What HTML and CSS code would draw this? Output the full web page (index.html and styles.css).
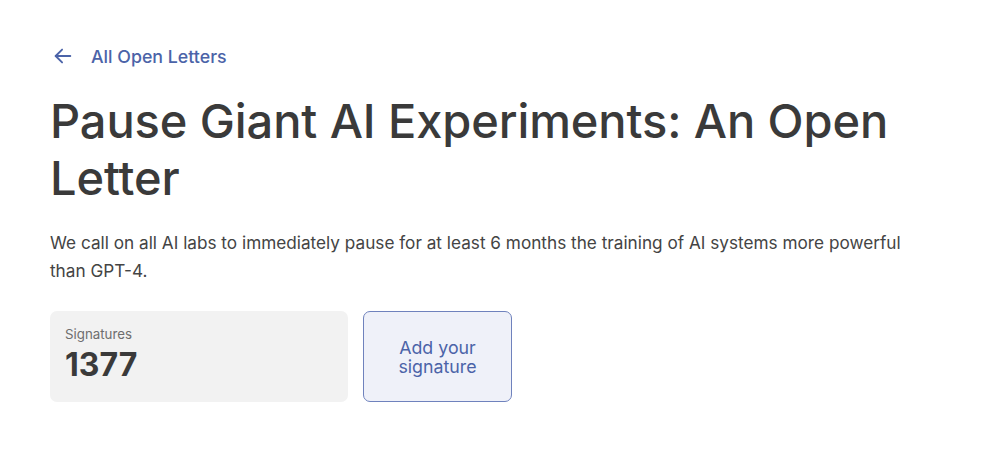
FILE: index.html
```html
<!DOCTYPE html>
<html>
<head>
<meta charset="utf-8">
<link rel="stylesheet" href="styles.css">
</head>
<body>
<main class="page">
  <a class="back" href="#">
    <svg class="back-icon" width="22" height="22" viewBox="0 0 24 24" fill="none" stroke="currentColor" stroke-width="2" stroke-linecap="round" stroke-linejoin="round"><path d="M20 12H4"/><path d="M11 5l-7 7 7 7"/></svg>
    <span>All Open Letters</span>
  </a>
  <h1 class="title">Pause Giant AI Experiments: An Open Letter</h1>
  <p class="lead">We call on all AI labs to immediately pause for at least 6 months the training of AI systems more powerful than GPT-4.</p>
  <div class="actions">
    <div class="count-card">
      <div class="count-label">Signatures</div>
      <div class="count-value">1377</div>
    </div>
    <a class="sign-btn" href="#">Add your<br>signature</a>
  </div>
</main>
</body>
</html>
```
FILE: styles.css
```css
html, body { margin: 0; padding: 0; background: #fff; }
body { font-family: Inter, "Noto Sans", sans-serif; color: #3b3b3b; }
.page { padding: 44px 50px 0 50px; width: 870px; }
.back { display: flex; align-items: center; gap: 17px; color: #4b63a8; text-decoration: none; font-size: 17.8px; font-weight: 500; height: 24px; margin-left: 2px; }
.back-icon { display: block; }
.title { font-size: 47px; font-weight: 500; line-height: 57px; margin: 24px 0 0 0; color: #3a3a3a; letter-spacing: -0.1px; }
.lead { font-size: 17.2px; line-height: 28px; margin: 23px 0 0 0; color: #444; }
.actions { display: flex; gap: 15px; margin-top: 26px; align-items: stretch; }
.count-card { width: 298px; height: 91px; box-sizing: border-box; background: #f2f2f2; border-radius: 7px; padding: 15px 15px; }
.count-label { font-size: 13.3px; color: #6e6e6e; line-height: 16px; }
.count-value { font-size: 32px; font-weight: 700; color: #3a3a3a; line-height: 38px; margin-top: 4px; }
.sign-btn { width: 149px; height: 91px; box-sizing: border-box; border: 1px solid #6f82bd; border-radius: 7px; background: #eff1f9; color: #4b63a8; text-decoration: none; display: flex; align-items: center; justify-content: center; text-align: center; font-size: 17.8px; line-height: 19px; }
```
